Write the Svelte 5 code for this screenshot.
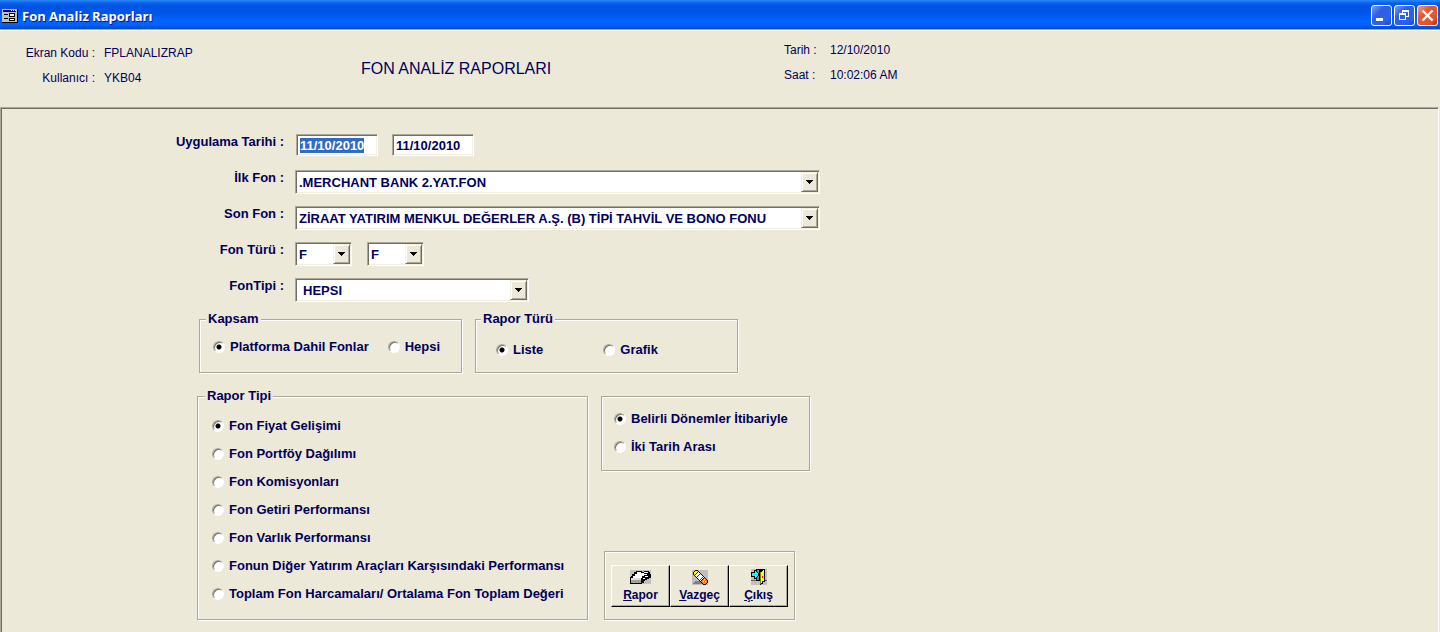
<script lang="ts">
  import { onMount } from 'svelte';

  let firstDate: HTMLInputElement;

  let startDate = '11/10/2010';
  let endDate = '11/10/2010';
  let scope = 'platform';
  let reportKind = 'liste';
  let reportType = 'fiyat';
  let period = 'donem';

  const scopes = [
    { value: 'platform', label: 'Platforma Dahil Fonlar' },
    { value: 'hepsi', label: 'Hepsi' }
  ];

  const reportKinds = [
    { value: 'liste', label: 'Liste' },
    { value: 'grafik', label: 'Grafik' }
  ];

  const reportTypes = [
    { value: 'fiyat', label: 'Fon Fiyat Gelişimi' },
    { value: 'portfoy', label: 'Fon Portföy Dağılımı' },
    { value: 'komisyon', label: 'Fon Komisyonları' },
    { value: 'getiri', label: 'Fon Getiri Performansı' },
    { value: 'varlik', label: 'Fon Varlık Performansı' },
    { value: 'diger', label: 'Fonun Diğer Yatırım Araçları Karşısındaki Performansı' },
    { value: 'toplam', label: 'Toplam Fon Harcamaları/ Ortalama Fon Toplam Değeri' }
  ];

  const periods = [
    { value: 'donem', label: 'Belirli Dönemler İtibariyle' },
    { value: 'iki', label: 'İki Tarih Arası' }
  ];

  onMount(() => {
    firstDate.focus();
    firstDate.select();
  });
</script>

{#snippet arrow()}
  <span class="arrow" aria-hidden="true">
    <svg width="7" height="4" viewBox="0 0 7 4" shape-rendering="crispEdges">
      <path d="M0 0h7v1h-1v1h-1v1h-1v1h-1v-1h-1v-1h-1v-1h-1z" />
    </svg>
  </span>
{/snippet}

<div class="window">
  <div class="titlebar">
    <svg class="app-icon" width="16" height="14" viewBox="0 0 16 14" shape-rendering="crispEdges">
      <path fill="#000" d="M0 0h16v14h-16z" />
      <path fill="#c0c0c0" d="M0 0h15v13h-15z" />
      <path fill="#000080" d="M1 1h13v2h-13z" />
      <path fill="#fff" d="M9 1h1v1h-1zM11 1h1v1h-1zM13 1h1v1h-1z" />
      <path fill="#000" d="M2 5h4v1h-4zM2 9h4v1h-4zM7 4h6v4h-6zM7 9h6v3h-6z" />
      <path fill="#fff" d="M8 5h4v2h-4zM8 10h4v1h-4z" />
    </svg>
    <span class="caption">Fon Analiz Raporları</span>
    <button type="button" class="win-btn" aria-label="Minimize">
      <svg width="19" height="19" viewBox="0 0 19 19" shape-rendering="crispEdges">
        <path fill="#fff" d="M4 12h7v3h-7z" />
      </svg>
    </button>
    <button type="button" class="win-btn" aria-label="Restore">
      <svg width="19" height="19" viewBox="0 0 19 19" shape-rendering="crispEdges">
        <path fill="#fff" fill-rule="evenodd" d="M7 4h7v7h-3v-1h2v-4h-5v1h-1z" />
        <path fill="#fff" fill-rule="evenodd" d="M4 7h7v7h-7zM5 9v4h5v-4z" />
      </svg>
    </button>
    <button type="button" class="win-btn close" aria-label="Close">
      <svg width="19" height="19" viewBox="0 0 19 19">
        <path stroke="#fff" stroke-width="2.4" d="M4.500 4.500l10 10M14.500 4.500l-10 10" />
      </svg>
    </button>
  </div>

  <header>
    <dl class="user">
      <dt>Ekran Kodu :</dt>
      <dd>FPLANALIZRAP</dd>
      <dt>Kullanıcı :</dt>
      <dd>YKB04</dd>
    </dl>
    <h1>FON ANALİZ RAPORLARI</h1>
    <dl class="clock">
      <dt>Tarih :</dt>
      <dd>12/10/2010</dd>
      <dt>Saat :</dt>
      <dd>10:02:06 AM</dd>
    </dl>
  </header>

  <main>
    <form on:submit|preventDefault>
      <div class="row">
        <label for="startDate">Uygulama Tarihi :</label>
        <div class="fields dates">
          <input type="text" id="startDate" class="date" bind:this={firstDate} bind:value={startDate} />
          <input type="text" class="date" aria-label="Bitiş Tarihi" bind:value={endDate} />
        </div>
      </div>
      <div class="row">
        <label for="firstFund">İlk Fon :</label>
        <div class="fields">
          <div class="combo wide">
            <select id="firstFund"><option>.MERCHANT BANK 2.YAT.FON</option></select>
            {@render arrow()}
          </div>
        </div>
      </div>
      <div class="row">
        <label for="lastFund">Son Fon :</label>
        <div class="fields">
          <div class="combo wide">
            <select id="lastFund">
              <option>ZİRAAT YATIRIM MENKUL DEĞERLER A.Ş. (B) TİPİ TAHVİL VE BONO FONU</option>
            </select>
            {@render arrow()}
          </div>
        </div>
      </div>
      <div class="row">
        <label for="kindFrom">Fon Türü :</label>
        <div class="fields">
          <div class="combo small">
            <select id="kindFrom"><option>F</option></select>
            {@render arrow()}
          </div>
          <div class="combo small">
            <select aria-label="Son Fon Türü"><option>F</option></select>
            {@render arrow()}
          </div>
        </div>
      </div>
      <div class="row">
        <label for="fundType">FonTipi :</label>
        <div class="fields">
          <div class="combo medium">
            <select id="fundType"><option>HEPSI</option></select>
            {@render arrow()}
          </div>
        </div>
      </div>

      <div class="groups top">
        <fieldset class="etched scope">
          <legend>Kapsam</legend>
          {#each scopes as item}
            <label class="radio">
              <input type="radio" name="scope" value={item.value} bind:group={scope} />
              {item.label}
            </label>
          {/each}
        </fieldset>
        <fieldset class="etched kind">
          <legend>Rapor Türü</legend>
          {#each reportKinds as item}
            <label class="radio">
              <input type="radio" name="kind" value={item.value} bind:group={reportKind} />
              {item.label}
            </label>
          {/each}
        </fieldset>
      </div>

      <div class="groups">
        <fieldset class="etched types">
          <legend>Rapor Tipi</legend>
          {#each reportTypes as item}
            <label class="radio">
              <input type="radio" name="type" value={item.value} bind:group={reportType} />
              {item.label}
            </label>
          {/each}
        </fieldset>
        <div class="side">
          <div class="etched periods" role="radiogroup" aria-label="Dönem">
            {#each periods as item}
              <label class="radio">
                <input type="radio" name="period" value={item.value} bind:group={period} />
                {item.label}
              </label>
            {/each}
          </div>
          <div class="etched actions">
            <button type="submit" class="tool">
              <svg width="21" height="14" viewBox="0 0 21 14" shape-rendering="crispEdges">
                <path fill="#c0c0c0" d="M0 0h21v14h-21z" />
                <path fill="#000" d="M6 1h6v1h2v-1h5v1h1v2h1v4h-2v1h-2v1h-2v1h-1v2h-2v1h-12v-7h1v-1h1v-2h2v-2h2z" />
                <path fill="#fff" d="M7 2h4v1h3v1h3v1h-3v1h-2v2h-1v1h-9v-1h1v-2h2v-2h2z" />
                <path fill="#fff" d="M14 2h4v1h-4zM15 6h3v1h-3zM13 8h2v1h-2z" />
                <path fill="#a0a0a0" d="M1 9h10v4h-10z" />
                <path fill="#dcdcdc" d="M1 8h10v2h-10z" />
              </svg>
              <span><u>R</u>apor</span>
            </button>
            <button type="reset" class="tool">
              <svg width="16" height="15" viewBox="0 0 16 15" shape-rendering="crispEdges">
                <path fill="#c0c0c0" d="M0 0h16v15h-16z" />
                <path fill="#808080" d="M3 11h6v1h2v1h1v1h-11v-1h1v-1h1z" />
                <path fill="#400000" d="M3 0h3v1h1v1h1v1h1v1h1v1h1v1h1v1h1v1h1v1h1v1h1v3h-1v1h-1v1h-3v-1h-1v-1h-1v-1h-1v-1h-1v-1h-1v-1h-1v-1h-1v-1h-1v-1h-1v-1h-1v-3h1v-1h1z" />
                <path fill="#ffff00" d="M3 1h3v1h-1v1h-1v1h-1v1h-1v-3h1z" />
                <path fill="#fff" d="M6 2h1v1h1v1h1v1h1v1h1v1h1v1h-1v1h-1v1h-1v1h-1v-1h-1v-1h-1v-1h-1v-1h-1v-1h-1v-1h1v-1h1v-1h1z" />
                <path fill="#e00000" d="M7 4h1v1h-1zM6 5h1v1h-1zM5 6h1v1h-1zM10 7h1v1h-1zM9 8h1v1h-1zM8 9h1v1h-1z" />
                <path fill="#ff8020" d="M12 8h1v1h1v1h1v3h-1v1h-3v-1h-1v-1h-1v-1h1v-1h1v-1h1z" />
                <path fill="#ffff00" d="M12 9h1v1h-1zM11 11h1v1h-1zM13 11h1v1h-1z" />
              </svg>
              <span><u>V</u>azgeç</span>
            </button>
            <button type="button" class="tool">
              <svg width="16" height="16" viewBox="0 0 16 16" shape-rendering="crispEdges">
                <path fill="#c0c0c0" d="M0 0h16v16h-16z" />
                <path fill="#606060" d="M0 11h5v1h-5zM14 11h2v1h-2z" />
                <path fill="#000" d="M5 0h9v13h-2v2h-2v1h-1v-4h-4z" />
                <path fill="#808080" d="M6 1h2v10h-2z" />
                <path fill="#808000" d="M9 3h1v12h-1z" />
                <path fill="#ffff00" d="M13 1v11h-2v2h-1v-11h1v-1h1v-1z" />
                <path fill="#ff0000" d="M11 7h1v2h-1z" />
                <path fill="#000" d="M3 1h2v1h1v1h1v1h1v3h-1v1h-1v1h-1v1h-2v-2h-3v-5h3z" />
                <path fill="#00ffff" d="M4 2h1v1h1v1h1v3h-1v1h-1v1h-1v-2h-3v-3h3z" />
              </svg>
              <span><u>Ç</u>ıkış</span>
            </button>
          </div>
        </div>
      </div>
    </form>
  </main>
</div>

<style>
:global(body) {
  margin: 0;
  background: #ece9d8;
}

.window {
  display: flex;
  flex-direction: column;
  min-height: 100vh;
  background: #ece9d8;
  color: #00005a;
  font-family: "Liberation Sans", Arial, sans-serif;
  font-size: 13px;
  line-height: 16px;
}

.titlebar {
  display: flex;
  align-items: center;
  gap: 2px;
  box-sizing: border-box;
  height: 31px;
  padding: 1px 2px 0;
  border-bottom: 1px solid #fff;
  background: linear-gradient(#2a86f8 0, #0a62ea 3px, #0054e3 6px, #0055e8 12px, #0062fb 20px, #0063ff 25px, #0046cc 29px, #aca899 29px);
}

.caption {
  flex: 1;
  margin-left: 2px;
  color: #fff;
  font-family: "Open Sans", sans-serif;
  font-size: 13px;
  font-weight: bold;
  text-shadow: 1px 1px 0 #0a1883;
}

.win-btn {
  box-sizing: border-box;
  width: 21px;
  height: 21px;
  padding: 0;
  border: 1px solid #fff;
  border-radius: 3px;
  background: linear-gradient(135deg, #7c9df0, #2f5fe0 35%, #2a62ee 75%, #1946c0);
}

.win-btn svg {
  display: block;
}

.close {
  background: linear-gradient(135deg, #f0a088, #e05a35 35%, #e0542c 75%, #b03010);
}

header {
  display: grid;
  grid-template-columns: 361px 423px 1fr;
  height: 76px;
  font-size: 12px;
}

dl {
  display: grid;
  align-content: start;
  row-gap: 9px;
  margin: 0;
}

dd {
  margin: 0;
}

.user {
  grid-template-columns: 95px 1fr;
  column-gap: 9px;
  padding-top: 14px;
}

.user dt {
  text-align: right;
}

.clock {
  grid-template-columns: 37px 1fr;
  column-gap: 9px;
  padding-top: 11px;
}

h1 {
  margin: 28px 0 0;
  font-size: 16px;
  font-weight: normal;
  line-height: 20px;
}

main {
  flex: 1;
  margin-right: 1px;
  border-top: 1px solid #aca899;
  border-left: 1px solid #aca899;
  border-right: 1px solid #fff;
  box-shadow: inset 1px 1px 0 #716f64;
  font-weight: bold;
}

form {
  padding: 26px 0 12px 1px;
}

.row {
  display: grid;
  grid-template-columns: 282px 1fr;
  column-gap: 11px;
  align-items: start;
  height: 36px;
}

.row > label {
  text-align: right;
}

.fields {
  display: flex;
  gap: 15px;
}

.dates {
  gap: 14px;
  margin-left: 1px;
}

.date,
.combo {
  box-sizing: border-box;
  border: 1px solid;
  border-color: #aca899 #fff #fff #aca899;
  background: #fff;
  box-shadow: inset 1px 1px 0 #716f64, inset -1px -1px 0 #f1efe2;
}

input,
select,
.tool {
  color: inherit;
  font: inherit;
}

.date {
  width: 82px;
  height: 22px;
  padding: 1px 3px 0;
  outline: none;
}

.date::selection {
  background: #316ac5;
  color: #fff;
}

.combo {
  display: grid;
  height: 24px;
  padding: 1px;
}

.wide {
  width: 525px;
}

.medium {
  width: 234px;
}

.small {
  width: 57px;
}

select,
.arrow {
  grid-area: 1 / 1;
}

select {
  width: 100%;
  padding: 1px 18px 0 2px;
  border: 0;
  background: none;
  outline: none;
  appearance: none;
}

.medium select {
  padding-left: 6px;
}

.arrow {
  display: flex;
  align-items: center;
  justify-content: center;
  justify-self: end;
  box-sizing: border-box;
  width: 17px;
  border: 1px solid;
  border-color: #f1efe2 #716f64 #716f64 #f1efe2;
  background: #ece9d8;
  box-shadow: inset 1px 1px 0 #fff, inset -1px -1px 0 #aca899;
  pointer-events: none;
}

.groups {
  display: flex;
  gap: 13px;
  padding: 15px 0 0 195px;
}

.groups.top {
  padding: 0 0 0 197px;
  margin-top: -3px;
}

.etched {
  box-sizing: border-box;
  min-width: 0;
  margin: 0;
  border: 1px solid #aca899;
  box-shadow: inset 1px 1px 0 #fff, 1px 1px 0 #fff;
}

legend {
  margin-left: -7px;
  padding: 0 2px;
  background: #ece9d8;
}

.kind legend {
  margin-left: -15px;
}

.radio {
  display: flex;
  align-items: center;
  gap: 5px;
  white-space: nowrap;
}

.radio input {
  flex: none;
  box-sizing: border-box;
  width: 12px;
  height: 12px;
  margin: 0;
  border: 1px solid;
  border-color: #aca899 #fff #fff #aca899;
  border-radius: 50%;
  background: #fff;
  box-shadow: inset 1px 1px 0 #716f64;
  appearance: none;
}

.radio input:checked {
  background: radial-gradient(circle, #000 2px, #fff 3px);
}

.scope,
.kind {
  display: flex;
  width: 263px;
  height: 62px;
}

.scope {
  gap: 19px;
  padding: 12px 13px;
  align-items: flex-start;
}

.kind {
  gap: 60px;
  padding: 15px 20px;
  align-items: flex-start;
}

.types {
  display: flex;
  flex-direction: column;
  gap: 12px;
  width: 391px;
  height: 232px;
  padding: 14px 14px;
}

.side {
  display: flex;
  flex-direction: column;
  justify-content: space-between;
  align-items: flex-start;
  padding-top: 8px;
}

.periods {
  display: flex;
  flex-direction: column;
  gap: 12px;
  width: 209px;
  height: 75px;
  padding: 14px 12px;
}

.actions {
  display: flex;
  width: 191px;
  height: 69px;
  margin-left: 3px;
  padding: 13px 6px;
}

.tool {
  display: flex;
  flex: 1;
  flex-direction: column;
  align-items: center;
  gap: 2px;
  height: 42px;
  padding: 3px 0 0;
  border: 1px solid;
  border-color: #fff #000 #000 #fff;
  background: #ece9d8;
  box-shadow: inset -1px -1px 0 #aca899;
  font-size: 12px;
}

.tool svg {
  flex: none;
  height: 16px;
}
</style>
